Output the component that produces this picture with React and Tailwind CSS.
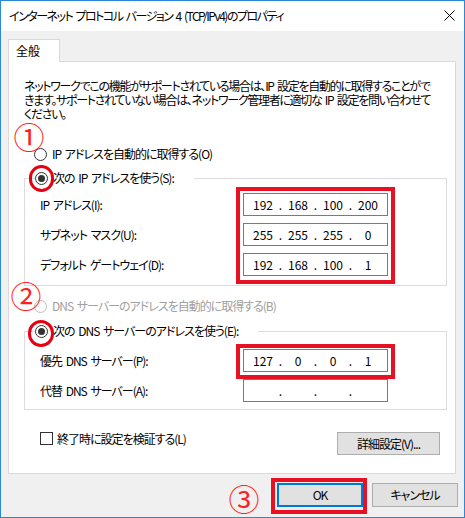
import React from "react";

const FONT = "font-['Noto_Sans_CJK_JP','Noto_Sans',sans-serif] [font-feature-settings:'palt']";

function Radio({ checked = false, disabled = false }) {
  return (
    <span
      className={`flex h-[13px] w-[13px] shrink-0 items-center justify-center rounded-full border bg-white ${
        disabled ? "border-[#bcbcbc]" : "border-[#333333]"
      }`}
    >
      {checked ? <span className="h-[7px] w-[7px] rounded-full bg-[#333333]" /> : null}
    </span>
  );
}

function IpBox({ octets = ["", "", "", ""] }) {
  return (
    <div className="flex h-[23px] w-[145px] items-center border border-[#7a7a7a] bg-white pl-[6px] text-[12px] leading-none tracking-normal text-black">
      {octets.map((o, i) => (
        <React.Fragment key={i}>
          {i > 0 ? <span className="w-[9px] text-center">.</span> : null}
          <span className="w-[26px] text-center">{o}</span>
        </React.Fragment>
      ))}
    </div>
  );
}

function FieldRow({ label, octets }) {
  return (
    <div className="flex h-[23px] items-center">
      <span className="w-[203px]">{label}</span>
      <IpBox octets={octets} />
    </div>
  );
}

function RadioLine({ checked, disabled, children }) {
  return (
    <div className="flex h-[20px] items-center gap-[5px]">
      <Radio checked={checked} disabled={disabled} />
      <span className={disabled ? "text-[#a0a0a0]" : ""}>{children}</span>
    </div>
  );
}

function Group({ legend, children, contentClass }) {
  return (
    <fieldset className="w-[423px] border border-[#dcdcdc] px-0">
      <legend className="ml-[10px] pr-[20px]">
        <RadioLine checked>{legend}</RadioLine>
      </legend>
      <div className={`flex flex-col gap-[7px] pl-[15px] ${contentClass}`}>{children}</div>
    </fieldset>
  );
}

function Button({ children, primary = false, className = "" }) {
  return (
    <button
      type="button"
      className={`flex items-center justify-center bg-[#e1e1e1] text-[12px] leading-none text-black ${
        primary ? "border-2 border-[#0078d7]" : "border border-[#adadad]"
      } ${className}`}
    >
      {children}
    </button>
  );
}

export default function App() {
  return (
    <div
      className={`relative flex h-[518px] w-[465px] flex-col border border-[#2b88d8] bg-[#f0f0f0] text-[12px] leading-[14px] tracking-[-1px] [word-spacing:2px] text-black ${FONT}`}
    >
      {/* title bar */}
      <div className="flex h-[30px] items-center justify-between bg-white pl-[8px] pr-[9px]">
        <span className="tracking-[-1.5px]">インターネット プロトコル バージョン 4 (TCP/IPv4)のプロパティ</span>
        <svg width="11" height="11" viewBox="0 0 11 11" className="mb-[1px]">
          <path d="M0.5 0.5 L10.5 10.5 M10.5 0.5 L0.5 10.5" stroke="#000" strokeWidth="1" />
        </svg>
      </div>

      <div className="flex flex-1 flex-col pl-[7px] pt-[8px]">
        {/* tab */}
        <div className="relative z-10 -mb-px flex h-[23px] w-[52px] items-center border border-b-0 border-[#d9d9d9] bg-white pl-[7px] tracking-normal">
          全般
        </div>

        {/* panel */}
        <div className="flex h-[413px] w-[448px] flex-col border border-[#d9d9d9] bg-white pl-[15px] pt-[17px]">
          <p className="whitespace-nowrap tracking-[-1.3px]">
            ネットワークでこの機能がサポートされている場合は、IP 設定を自動的に取得することがで
            <br />
            きます。サポートされていない場合は、ネットワーク管理者に適切な IP 設定を問い合わせて
            <br />
            ください。
          </p>

          <div className="ml-[10px] mt-[23px]">
            <RadioLine>IP アドレスを自動的に取得する(O)</RadioLine>
          </div>

          <div className="mt-[4px]">
            <Group legend="次の IP アドレスを使う(S):" contentClass="pt-[5px] pb-[9px]">
              <FieldRow label="IP アドレス(I):" octets={["192", "168", "100", "200"]} />
              <FieldRow label="サブネット マスク(U):" octets={["255", "255", "255", "0"]} />
              <FieldRow label="デフォルト ゲートウェイ(D):" octets={["192", "168", "100", "1"]} />
            </Group>
          </div>

          <div className="ml-[10px] mt-[10px]">
            <RadioLine disabled>DNS サーバーのアドレスを自動的に取得する(B)</RadioLine>
          </div>

          <div className="mt-[5px]">
            <Group legend="次の DNS サーバーのアドレスを使う(E):" contentClass="pt-[8px] pb-[7px]">
              <FieldRow label="優先 DNS サーバー(P):" octets={["127", "0", "0", "1"]} />
              <FieldRow label="代替 DNS サーバー(A):" />
            </Group>
          </div>

          <div className="mt-[22px] flex w-[416px] items-start justify-between">
            <label className="ml-[16px] flex h-[13px] items-center gap-[4px]">
              <span className="h-[13px] w-[13px] border border-[#333333] bg-white" />
              <span>終了時に設定を検証する(L)</span>
            </label>
            <Button className="h-[23px] w-[103px]">詳細設定(V)...</Button>
          </div>
        </div>

        {/* dialog buttons */}
        <div className="mt-[9px] flex justify-end gap-[9px] pr-[6px]">
          <Button primary className="h-[24px] w-[86px]">OK</Button>
          <Button className="h-[24px] w-[86px]">キャンセル</Button>
        </div>
      </div>

      {/* red annotations */}
      <div className="pointer-events-none absolute left-[12px] top-[119px] flex h-[30px] w-[32px] items-center justify-center text-[31px] leading-none tracking-normal text-[#ff1f1f]">
        ①
      </div>
      <div className="pointer-events-none absolute left-[9px] top-[278px] flex h-[30px] w-[32px] items-center justify-center text-[31px] leading-none tracking-normal text-[#ff1f1f]">
        ②
      </div>
      <div className="pointer-events-none absolute left-[227px] top-[481px] flex h-[30px] w-[32px] items-center justify-center text-[31px] leading-none tracking-normal text-[#ff1f1f]">
        ③
      </div>
      <div className="pointer-events-none absolute left-[28px] top-[164px] h-[27px] w-[25px] rounded-full border-[3px] border-[#e60012]" />
      <div className="pointer-events-none absolute left-[27px] top-[319px] h-[27px] w-[26px] rounded-full border-[3px] border-[#e60012]" />
      <div className="pointer-events-none absolute left-[235px] top-[186px] h-[97px] w-[159px] border-4 border-[#e81123]" />
      <div className="pointer-events-none absolute left-[235px] top-[343px] h-[35px] w-[159px] border-4 border-[#e81123]" />
      <div className="pointer-events-none absolute left-[270px] top-[477px] h-[36px] w-[96px] border-4 border-[#e81123]" />
    </div>
  );
}
